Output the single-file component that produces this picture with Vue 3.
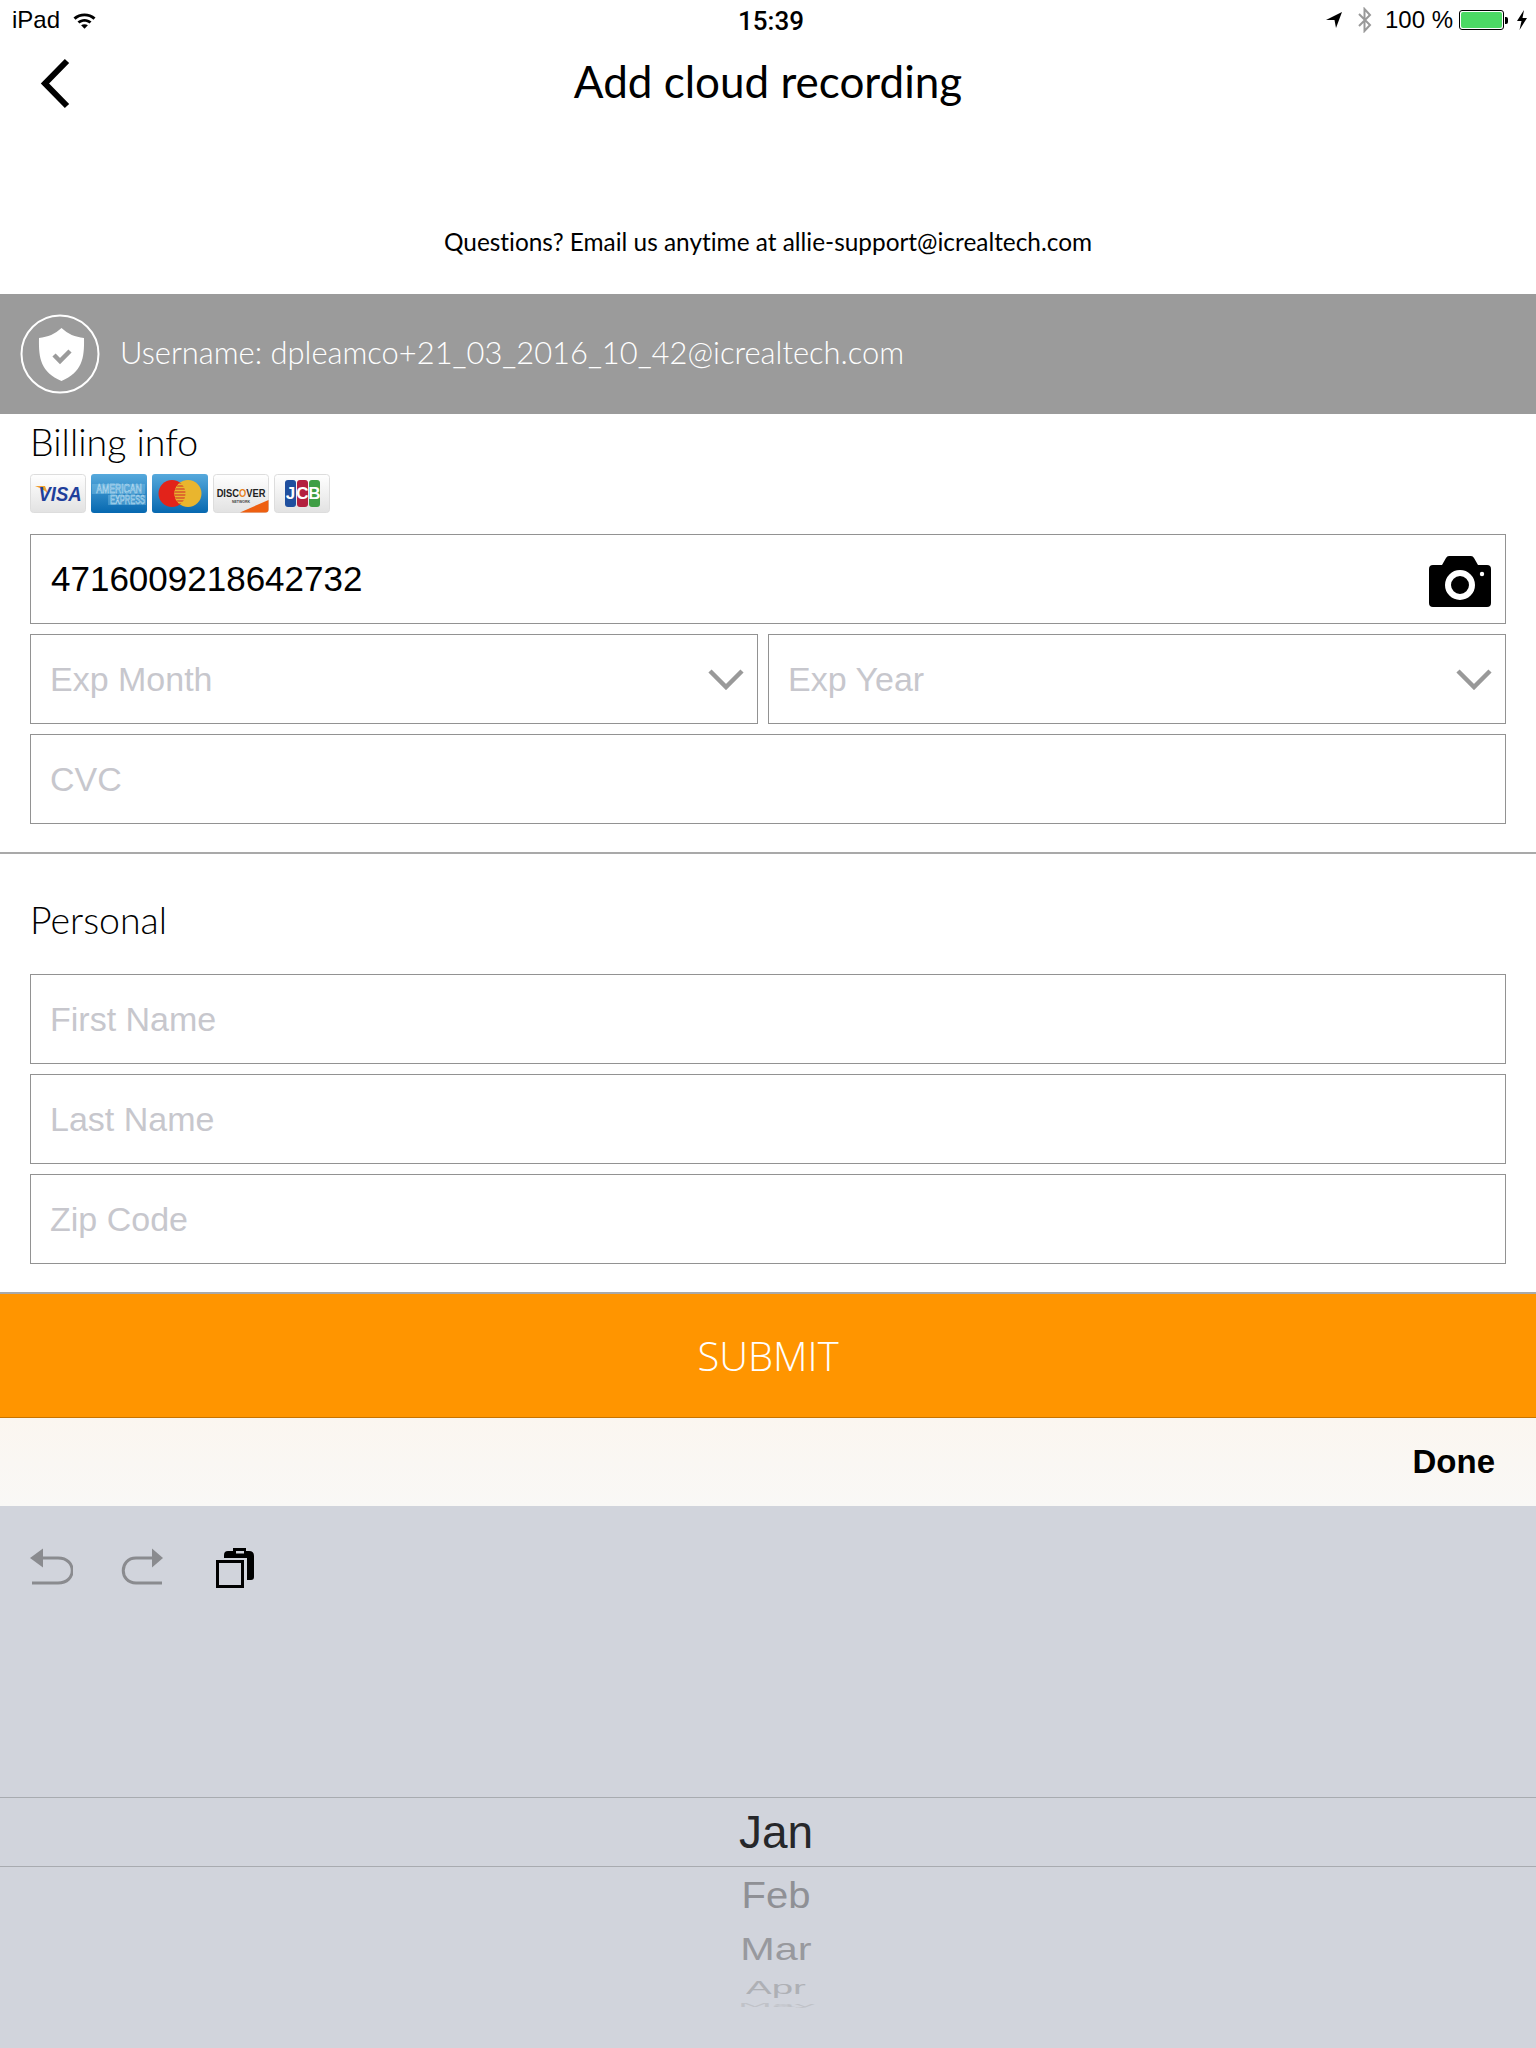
<script setup>
const personalFields = ['First Name', 'Last Name', 'Zip Code'];
const wheel = [
  { label: 'Feb', cls: 'feb' },
  { label: 'Mar', cls: 'mar' },
  { label: 'Apr', cls: 'apr' },
  { label: 'May', cls: 'may' },
];
</script>

<template>
  <div class="page">
    <div class="status-bar">
      <div class="status-left">
        <span>iPad</span>
        <svg class="wifi" width="25" height="18" viewBox="0 0 24 18">
          <path d="M1 6.500C7 1 17 1 23 6.500L21 8.700C16 4.200 8 4.200 3 8.700Z" fill="#000" />
          <path d="M5 10.500C9 7 15 7 19 10.500L17 12.600C14 10 10 10 7 12.600Z" fill="#000" />
          <path d="M8.600 14.200C10.500 12.800 13.500 12.800 15.400 14.200L12 17.800Z" fill="#000" />
        </svg>
      </div>
      <div class="status-time">15:39</div>
      <div class="status-right">
        <svg width="18" height="18" viewBox="0 0 18 18"><path d="M1 9L17 1L11 17L9.500 9Z" fill="#000" /></svg>
        <svg class="bt" width="18" height="26" viewBox="0 0 18 26"><path d="M3 7L14 18L8.500 24V2L14 8L3 19" fill="none" stroke="#999" stroke-width="2" /></svg>
        <span class="pct">100 %</span>
        <div class="battery"><div class="battery-fill"></div></div>
        <div class="battery-tip"></div>
        <svg width="12" height="20" viewBox="0 0 12 20"><path d="M8 0L1 11H5.500L3.500 20L11 8H6.500Z" fill="#000" /></svg>
      </div>
    </div>

    <div class="nav">
      <svg class="back" width="34" height="54" viewBox="0 0 34 54">
        <path d="M29 5L7 27.500L29 50" fill="none" stroke="#000" stroke-width="6" />
      </svg>
      <h1>Add cloud recording</h1>
    </div>

    <p class="questions">Questions? Email us anytime at allie-support@icrealtech.com</p>

    <div class="user-bar">
      <svg width="80" height="80" viewBox="0 0 80 80">
        <circle cx="40" cy="40" r="38.500" fill="none" stroke="#fff" stroke-width="2" />
        <path d="M41.500 14C48 20 55 23 64 24C64.500 45 62 58 41.500 67C21 58 18.500 45 19 24C28 23 35 20 41.500 14Z" fill="#fff" />
        <path d="M34 41L40 47L50 37" fill="none" stroke="#9b9b9b" stroke-width="4.500" />
      </svg>
      <span>Username: dpleamco+21_03_2016_10_42@icrealtech.com</span>
    </div>

    <section class="billing">
      <h2>Billing info</h2>
      <div class="cards">
        <svg class="card" viewBox="0 0 56 39">
          <defs>
            <linearGradient id="lightcard" x1="0" y1="0" x2="0" y2="1"><stop offset="0" stop-color="#fff" /><stop offset="1" stop-color="#e2e2e2" /></linearGradient>
            <linearGradient id="bluecard" x1="0" y1="0" x2="0" y2="1"><stop offset="0" stop-color="#56a9dc" /><stop offset="1" stop-color="#0668b0" /></linearGradient>
            <clipPath id="mc-red"><circle cx="20" cy="19.500" r="13.500" /></clipPath>
            <clipPath id="mc-yellow"><circle cx="36" cy="19.500" r="13.500" /></clipPath>
          </defs>
          <rect x="0.500" y="0.500" width="55" height="38" rx="3" fill="url(#lightcard)" stroke="#ddd" />
          <path d="M5 12H15L18 20C15 16 10 14 5 12Z" fill="#f0a030" />
          <text transform="translate(30 27) scale(0.88 1)" class="visa">VISA</text>
        </svg>
        <svg class="card" viewBox="0 0 56 39">
          <rect width="56" height="39" rx="3" fill="url(#bluecard)" />
          <rect x="1" y="10" width="53" height="10" fill="#8ccbec" opacity="0.350" />
          <rect x="17" y="21" width="38" height="10" fill="#8ccbec" opacity="0.350" />
          <text transform="translate(28 19.200) scale(0.72 1)" class="amex">AMERICAN</text>
          <text transform="translate(36.500 30.200) scale(0.62 1)" class="amex">EXPRESS</text>
        </svg>
        <svg class="card" viewBox="0 0 56 39">
          <rect width="56" height="39" rx="3" fill="url(#bluecard)" />
          <circle cx="20" cy="19.500" r="13.500" fill="#e2231a" />
          <circle cx="36" cy="19.500" r="13.500" fill="#e9b52e" />
          <g clip-path="url(#mc-red)">
            <g clip-path="url(#mc-yellow)">
              <rect x="22" y="6" width="12" height="27" fill="#e9b52e" />
              <path d="M22 9h12M22 12h12M22 15h12M22 18h12M22 21h12M22 24h12M22 27h12M22 30h12" stroke="#d9552c" stroke-width="1.600" />
            </g>
          </g>
        </svg>
        <svg class="card" viewBox="0 0 56 39">
          <rect x="0.500" y="0.500" width="55" height="38" rx="3" fill="url(#lightcard)" stroke="#ddd" />
          <path d="M27 38.500L55.500 26V35.500Q55.500 38.500 52.500 38.500Z" fill="#ee5f10" />
          <text transform="translate(28 23) scale(0.85 1)" class="discover">DISC<tspan fill="#e8811c">O</tspan>VER</text>
          <text x="28" y="28.500" class="network">NETWORK</text>
        </svg>
        <svg class="card" viewBox="0 0 56 39">
          <rect x="0.500" y="0.500" width="55" height="38" rx="3" fill="url(#lightcard)" stroke="#ddd" />
          <rect x="11" y="6" width="11" height="27" rx="3" fill="#1f4f9e" />
          <rect x="23" y="6" width="11" height="27" rx="3" fill="#b3213f" />
          <rect x="35" y="6" width="11" height="27" rx="3" fill="#3f9e45" />
          <text x="16.500" y="25" class="jcb">J</text>
          <text x="28.500" y="25" class="jcb">C</text>
          <text x="40.500" y="25" class="jcb">B</text>
        </svg>
      </div>

      <div class="field card-number">
        <span class="value">4716009218642732</span>
        <svg class="camera" width="62" height="51" viewBox="0 0 62 51">
          <path d="M4 9H13L17 2Q18 0 20 0H42Q44 0 45 2L49 9H58Q62 9 62 13V47Q62 51 58 51H4Q0 51 0 47V13Q0 9 4 9Z" fill="#000" />
          <circle cx="31" cy="29" r="12" fill="none" stroke="#fff" stroke-width="6" />
          <circle cx="53" cy="18" r="2.200" fill="#fff" />
        </svg>
      </div>
      <div class="exp-row">
        <div class="field select month">
          <span class="placeholder">Exp Month</span>
          <svg width="36" height="22" viewBox="0 0 36 22"><path d="M2 3L18 19L34 3" fill="none" stroke="#999" stroke-width="4.500" /></svg>
        </div>
        <div class="field select year">
          <span class="placeholder">Exp Year</span>
          <svg width="36" height="22" viewBox="0 0 36 22"><path d="M2 3L18 19L34 3" fill="none" stroke="#999" stroke-width="4.500" /></svg>
        </div>
      </div>
      <div class="field"><span class="placeholder">CVC</span></div>
    </section>

    <section class="personal">
      <h2>Personal</h2>
      <div class="stack">
        <div v-for="name in personalFields" :key="name" class="field">
          <span class="placeholder">{{ name }}</span>
        </div>
      </div>
    </section>

    <div class="submit">SUBMIT</div>

    <div class="done-bar"><span>Done</span></div>

    <div class="keyboard">
      <div class="tools">
        <svg width="44" height="40" viewBox="0 0 44 40">
          <path d="M3 37H29C48 37 48 12 29 12H12" fill="none" stroke="#8a8b8f" stroke-width="3" />
          <path d="M1 12L14 2.500V21.500Z" fill="#8a8b8f" />
        </svg>
        <svg width="44" height="40" viewBox="0 0 44 40">
          <path d="M41 37H15C-2 37 -2 12 15 12H32" fill="none" stroke="#8a8b8f" stroke-width="3" />
          <path d="M42 12L31 2.500V21.500Z" fill="#8a8b8f" />
        </svg>
        <svg class="paste" width="40" height="42" viewBox="0 0 40 42">
          <path d="M8 12V9Q8 5 12 5H17V2H30V5H33Q38 5 38 10V31Q38 34 35 34H31V12Z" fill="#000" />
          <rect x="20" y="5" width="8" height="2.500" fill="#d1d4dc" />
          <rect x="1.500" y="15.500" width="25" height="25" fill="none" stroke="#000" stroke-width="3" />
        </svg>
      </div>
      <div class="picker">
        <div class="selected">Jan</div>
        <div v-for="m in wheel" :key="m.label" class="wheel-item" :class="m.cls"><span>{{ m.label }}</span></div>
      </div>
    </div>
  </div>
</template>

<style>
html, body { margin: 0; background: #fff; }
</style>

<style scoped>
.page {
  width: 1536px;
  height: 2048px;
  overflow: hidden;
  display: flex;
  flex-direction: column;
  font-family: Lato, "Liberation Sans", sans-serif;
  font-variant-ligatures: none;
  color: #000;
  background: #fff;
}

.status-bar {
  height: 40px;
  flex: none;
  padding: 0 8px 0 12px;
  display: grid;
  grid-template-columns: 1fr auto 1fr;
  align-items: center;
  font-family: "Liberation Sans", sans-serif;
  font-size: 24px;
  box-sizing: border-box;
}
.status-left { display: flex; align-items: center; gap: 12px; }
.status-time { font-family: Roboto, sans-serif; font-size: 26px; font-weight: 500; margin-left: 2px; margin-top: 1px; }
.status-right { display: flex; align-items: center; justify-content: flex-end; }
.status-right .bt { margin: 0 11px 0 13px; }
.pct { margin-right: 6px; }
.battery {
  width: 45px;
  height: 20px;
  box-sizing: border-box;
  border: 1px solid #000;
  border-radius: 3px;
  padding: 1px;
}
.battery-fill { width: 100%; height: 100%; background: #4cd964; border-radius: 2px; }
.battery-tip { width: 3px; height: 7px; background: #000; margin: 0 8px 0 1px; border-radius: 0 2px 2px 0; }

.nav {
  height: 86px;
  flex: none;
  position: relative;
  display: flex;
  justify-content: center;
  align-items: center;
  padding-bottom: 5px;
  box-sizing: border-box;
}
.back { position: absolute; left: 38px; top: 16px; }
h1 { margin: 0; font-size: 44px; font-weight: 400; }

.questions {
  margin: 0;
  height: 168px;
  flex: none;
  box-sizing: border-box;
  padding-top: 100px;
  text-align: center;
  font-size: 24.400px;
  line-height: 32px;
}

.user-bar {
  height: 120px;
  flex: none;
  background: #9b9b9b;
  display: flex;
  align-items: center;
  padding-left: 20px;
  gap: 20px;
  color: #fff;
  font-size: 30.900px;
  font-weight: 300;
}
.user-bar span { margin-top: -3px; }

h2 { margin: 0; font-size: 37.500px; font-weight: 300; line-height: 44px; }

.billing { padding: 6px 30px 0; height: 440px; box-sizing: border-box; flex: none; border-bottom: 2px solid #a9a9a9; }
.cards { display: flex; gap: 5px; margin: 10px 0 21px; height: 39px; }
.card { width: 56px; height: 39px; display: block; }
.visa { font: italic 700 21px "Liberation Sans", sans-serif; fill: #1f3f9b; text-anchor: middle; }
.amex { font: 400 12px "Liberation Sans", sans-serif; fill: #3d96d2; stroke: #d4eaf7; stroke-width: 0.500px; text-anchor: middle; }
.discover { font: 700 11px "Liberation Sans", sans-serif; fill: #222; text-anchor: middle; }
.network { font: 700 3.500px "Liberation Sans", sans-serif; fill: #444; text-anchor: middle; }
.jcb { font: 700 17px "Liberation Sans", sans-serif; fill: #fff; text-anchor: middle; }

.field {
  height: 90px;
  box-sizing: border-box;
  border: 1px solid #929292;
  display: flex;
  align-items: center;
  justify-content: space-between;
  padding: 0 19px;
  font-family: "Liberation Sans", sans-serif;
  font-size: 34px;
}
.value { color: #000; font-size: 35px; margin-left: 1px; }
.placeholder { color: #c7c7cd; }
.card-number { padding-right: 14px; }
.camera { margin-top: 5px; }
.exp-row { display: flex; gap: 10px; margin: 10px 0; }
.month { width: 728px; flex: none; padding-right: 13px; }
.year { flex: 1; padding-right: 13px; }

.personal { padding: 44px 30px 0; height: 440px; box-sizing: border-box; flex: none; border-bottom: 2px solid #a9a9a9; }
.stack { display: flex; flex-direction: column; gap: 10px; margin-top: 32px; }

.submit {
  height: 124px;
  flex: none;
  background: #ff9500;
  border-bottom: 1px solid #c87400;
  box-sizing: border-box;
  color: #fff;
  display: flex;
  align-items: center;
  justify-content: center;
  font-family: "Open Sans", sans-serif;
  font-size: 40px;
  font-weight: 300;
}

.done-bar {
  height: 88px;
  flex: none;
  background: linear-gradient(#fbf6f0, #f9f8f6);
  display: flex;
  align-items: center;
  justify-content: flex-end;
  padding-right: 41px;
  font-family: "Liberation Sans", sans-serif;
  font-size: 33px;
  font-weight: 700;
}

.keyboard {
  flex: 1;
  background: #d1d4dc;
  display: flex;
  flex-direction: column;
}
.tools { height: 291px; flex: none; box-sizing: border-box; padding: 40px 0 0 29px; display: flex; align-items: flex-start; gap: 48px; }
.paste { margin-left: 3px; }
.picker { display: flex; flex-direction: column; align-items: center; font-family: "Liberation Sans", sans-serif; }
.selected {
  width: 100%;
  height: 68px;
  padding-left: 16px;
  box-sizing: content-box;
  border-top: 1px solid #a8abb0;
  border-bottom: 1px solid #a8abb0;
  display: flex;
  align-items: center;
  justify-content: center;
  font-size: 46px;
  color: #26272a;
}
.wheel-item { width: 160px; margin-left: 16px; display: flex; align-items: center; justify-content: center; }
.wheel-item span { display: block; line-height: 1; }
.feb { height: 56px; font-size: 40px; color: #8f9095; }
.feb span { transform: scaleY(0.91); }
.mar { height: 53px; font-size: 36px; color: #98999e; }
.mar span { transform: scaleX(1.15) scaleY(0.85); }
.apr { height: 24px; font-size: 32px; color: #aeb0b5; }
.apr span { transform: scaleX(1.2) scaleY(0.57); }
.may { height: 12px; font-size: 28px; color: #c0c2c8; }
.may span { transform: scaleX(1.45) scaleY(0.16); }
</style>
